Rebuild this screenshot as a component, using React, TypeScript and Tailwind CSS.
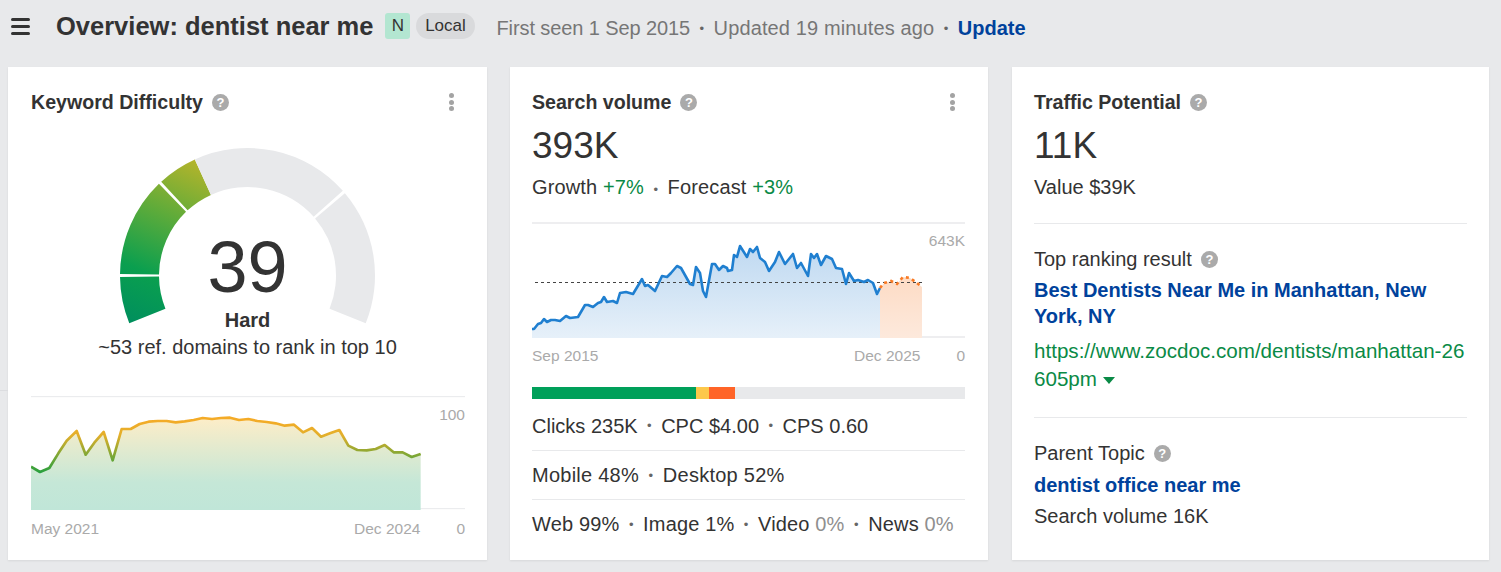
import React from 'react';

const kdPoints = '93,262 120,278 148,266 175,222 200,184 230,155 257,226 283,190 311,158 338,243 365,149 392,149 419,134 446,127 473,125 500,125 527,129 554,126 581,122 608,116 636,119 663,116 690,115 717,122 745,119 772,125 800,128 827,132 854,139 882,136 909,159 936,146 963,172 990,162 1018,152 1045,199 1072,212 1100,213 1127,209 1154,197 1181,219 1208,219 1235,233 1262,224';

const volumePoints = '532,329 534,329 538,324 541,323 544,319 547,322 551,320 555,320 560,321 566,316 570,318 578,317 585,305 588,305 593,307 598,303 601,302 604,297 607,302 613,301 617,303 620,293 626,292 633,294 642,279 645,286 648,285 655,291 662,276 667,277 671,273 677,266 681,268 690,284 693,285 696,267 700,273 703,291 706,297 712,264 715,264 719,270 723,266 727,268 728,271 732,270 734,255 737,257 740,246 747,257 750,249 753,252 757,247 760,258 765,262 769,271 775,262 779,252 785,264 793,254 797,268 801,263 808,276 811,254 814,258 817,254 821,265 826,256 832,259 836,268 842,269 846,284 849,273 854,281 858,280 864,282 868,280 873,283 877,294 880,288';

const forecastPoints = '880,288 884,283 891,281 897,284 903,277 910,278 917,283 922,287';

// gauge centre and radii, measured from the screenshot
const CX = 247.5;
const CY = 275.5;
const R_OUT = 127.5;
const R_IN = 88.5;

const arc = (from: number, to: number) => {
  const pt = (r: number, deg: number) => {
    const a = (deg * Math.PI) / 180;
    return `${(CX + r * Math.cos(a)).toFixed(2)} ${(CY - r * Math.sin(a)).toFixed(2)}`;
  };
  return `M${pt(R_OUT, from)} A${R_OUT} ${R_OUT} 0 0 1 ${pt(R_OUT, to)} L${pt(R_IN, to)} A${R_IN} ${R_IN} 0 0 0 ${pt(R_IN, from)} Z`;
};

const Help = () => (
  <span className="ml-[9px] inline-flex h-[17px] w-[17px] items-center justify-center rounded-full bg-[#aaaaaa] text-[13px] font-bold leading-none text-white">?</span>
);

const Kebab = () => (
  <div className="flex flex-col gap-[1.5px]">
    <span className="h-[5px] w-[5px] rounded-full bg-[#a3a3a3]" />
    <span className="h-[5px] w-[5px] rounded-full bg-[#a3a3a3]" />
    <span className="h-[5px] w-[5px] rounded-full bg-[#a3a3a3]" />
  </div>
);

const CardTitle = ({ title, menu }: { title: string; menu?: boolean }) => (
  <div className="flex h-[22px] items-center justify-between pr-[11px]">
    <div className="flex items-center text-[19.6px] font-bold text-[#333333]">
      <span className="pt-px">{title}</span>
      <Help />
    </div>
    {menu && <Kebab />}
  </div>
);

const Dot = () => <span className="mx-[9.5px] text-[13px] leading-none text-[#666666]">•</span>;

const Gauge = () => (
  <svg width="434" height="195" viewBox="31 140 434 195" className="block">
    <defs>
      <linearGradient id="gaugeFill" gradientUnits="userSpaceOnUse" x1="135" y1="325" x2="205" y2="165">
        <stop offset="0" stopColor="#008f5d" />
        <stop offset="0.3" stopColor="#0a9f4f" />
        <stop offset="0.65" stopColor="#5dab3a" />
        <stop offset="1" stopColor="#b3b42b" />
      </linearGradient>
    </defs>
    <path d={arc(202, 180.7)} fill="url(#gaugeFill)" />
    <path d={arc(179.3, 134)} fill="url(#gaugeFill)" />
    <path d={arc(132.6, 114.4)} fill="url(#gaugeFill)" />
    <path d={arc(114.4, 41.6)} fill="#e8e9eb" />
    <path d={arc(40.2, -22)} fill="#e8e9eb" />
  </svg>
);

const KdChart = () => (
  <svg width="434" height="115" viewBox="93 50 1302 345" className="block">
    <defs>
      <linearGradient id="kdLine" gradientUnits="userSpaceOnUse" x1="0" y1="120" x2="0" y2="280">
        <stop offset="0" stopColor="#f4ab27" />
        <stop offset="0.3" stopColor="#e3af2b" />
        <stop offset="1" stopColor="#27a03e" />
      </linearGradient>
      <linearGradient id="kdArea" gradientUnits="userSpaceOnUse" x1="0" y1="120" x2="0" y2="390">
        <stop offset="0" stopColor="#fcedc8" />
        <stop offset="0.7" stopColor="#c5e7d7" />
        <stop offset="1" stopColor="#c0e6d8" />
      </linearGradient>
    </defs>
    <line x1="93" y1="52" x2="1395" y2="52" stroke="#e8e9eb" strokeWidth="3" />
    <line x1="93" y1="388" x2="1395" y2="388" stroke="#e8e9eb" strokeWidth="3" />
    <polygon points={`${kdPoints} 1262,392 93,392`} fill="url(#kdArea)" />
    <polyline points={kdPoints} fill="none" stroke="url(#kdLine)" strokeWidth="8" strokeLinejoin="round" />
  </svg>
);

const VolumeChart = () => (
  <svg width="433" height="116" viewBox="532 222 433 116" className="block">
    <defs>
      <linearGradient id="volArea" gradientUnits="userSpaceOnUse" x1="0" y1="246" x2="0" y2="337">
        <stop offset="0" stopColor="#bfd9f1" />
        <stop offset="1" stopColor="#e6f0f9" />
      </linearGradient>
      <linearGradient id="foreArea" gradientUnits="userSpaceOnUse" x1="0" y1="280" x2="0" y2="337">
        <stop offset="0" stopColor="#fddcc6" />
        <stop offset="1" stopColor="#fde9dc" />
      </linearGradient>
    </defs>
    <line x1="532" y1="223" x2="965" y2="223" stroke="#e8e9eb" strokeWidth="1.5" />
    <line x1="532" y1="337" x2="965" y2="337" stroke="#e8e9eb" strokeWidth="1.5" />
    <polygon points={`${volumePoints} 880,338 532,338`} fill="url(#volArea)" />
    <polygon points={`${forecastPoints} 922,338 880,338`} fill="url(#foreArea)" />
    <line x1="535" y1="282.5" x2="922" y2="282.5" stroke="#444444" strokeWidth="1" strokeDasharray="3 3" />
    <polyline points={volumePoints} fill="none" stroke="#1f7fd0" strokeWidth="2.6" strokeLinejoin="round" />
    <polyline points={forecastPoints} fill="none" stroke="#f97a24" strokeWidth="2.6" strokeDasharray="3 3.5" />
  </svg>
);

const Green = ({ children }: { children: React.ReactNode }) => <span className="text-[#0a8a46]">{children}</span>;

const Muted = ({ children }: { children: React.ReactNode }) => <span className="text-[#8f8f8f]">{children}</span>;

export default function App() {
  return (
    <div className="relative h-[572px] w-[1501px] overflow-hidden bg-[#e8e9eb] text-[20px] text-[#333333] [font-family:'Liberation_Sans',Arial,sans-serif]">
      <div className="absolute left-0 top-[390px] h-px w-[8px] bg-[#dcdde0]" />

      <header className="flex h-[67px] items-start pl-[11px] pt-[13px]">
        <div className="mt-[5px] flex w-[19px] flex-col gap-[4px]">
          <span className="h-[3px] rounded-sm bg-[#333333]" />
          <span className="h-[3px] rounded-sm bg-[#333333]" />
          <span className="h-[3px] rounded-sm bg-[#333333]" />
        </div>
        <h1 className="ml-[26px] text-[25.5px] font-bold leading-[27px] text-[#333333]">Overview: dentist near me</h1>
        <span className="ml-[12px] flex h-[26px] w-[25px] items-center justify-center rounded-[3px] bg-[#b3e6d1] text-[17px]">N</span>
        <span className="ml-[6px] flex h-[26px] w-[59px] items-center justify-center rounded-full bg-[#d9dadc] pr-px text-[17px]">Local</span>
        <div className="ml-[22px] flex h-[30px] items-center text-[#767676]">
          <span className="-ml-px tracking-[-0.1px]">First seen 1 Sep 2015</span>
          <Dot />
          <span className="tracking-[0.12px]">Updated 19 minutes ago</span>
          <Dot />
          <a className="font-bold text-[#00429c]">Update</a>
        </div>
      </header>

      <main className="grid grid-cols-[479px_478px_478px] gap-x-[23px] pl-[8px]">
        <section className="h-[493px] bg-white pl-[23px] pr-[22px] pt-[24px] shadow-[0_1px_2px_rgba(0,0,0,0.08)]">
          <CardTitle title="Keyword Difficulty" menu />
          <div className="relative mt-[27px]">
            <Gauge />
            <div className="absolute inset-x-0 top-[85px] flex flex-col items-center pr-[1px]">
              <div className="text-[72px] leading-[84px] text-[#333333]">39</div>
              <div className="text-[20px] font-bold leading-[22px]">Hard</div>
            </div>
          </div>
          <div className="mt-px pr-[1px] text-center leading-[22px]">~53 ref. domains to rank in top 10</div>
          <div className="relative mt-[38px]">
            <KdChart />
            <span className="absolute right-0 top-[9px] text-[15.5px] leading-[20px] text-[#aaaaaa]">100</span>
          </div>
          <div className="mt-[8px] flex text-[15.5px] leading-[20px] text-[#aaaaaa]">
            <span>May 2021</span>
            <span className="ml-auto mr-[36px]">Dec 2024</span>
            <span>0</span>
          </div>
        </section>

        <section className="h-[493px] bg-white pl-[22px] pr-[23px] pt-[24px] shadow-[0_1px_2px_rgba(0,0,0,0.08)]">
          <div className="-mr-[1px]">
            <CardTitle title="Search volume" menu />
          </div>
          <div className="mt-[11px] text-[37px] leading-[44px]">393K</div>
          <div className="mt-[7px] leading-[24px] tracking-[0.13px]">
            Growth <Green>+7%</Green>
            <Dot />
            Forecast <Green>+3%</Green>
          </div>
          <div className="relative mt-[23px]">
            <VolumeChart />
            <span className="absolute right-0 top-[9px] text-[15.5px] leading-[20px] text-[#aaaaaa]">643K</span>
          </div>
          <div className="mt-[8px] flex text-[15.5px] leading-[20px] text-[#aaaaaa]">
            <span>Sep 2015</span>
            <span className="ml-auto mr-[36px]">Dec 2025</span>
            <span>0</span>
          </div>
          <div className="mt-[21px] flex h-[12px] bg-[#e8e9eb]">
            <span className="w-[164px] bg-[#00a05a]" />
            <span className="w-[13px] bg-[#fdc84b]" />
            <span className="w-[26px] bg-[#ff6428]" />
          </div>
          <div className="flex h-[52px] items-center border-b border-[#e8e9eb] pt-[2px]">
            Clicks 235K<Dot />CPC $4.00<Dot />CPS 0.60
          </div>
          <div className="flex h-[49px] items-center border-b border-[#e8e9eb] tracking-[0.25px]">
            Mobile 48%<Dot />Desktop 52%
          </div>
          <div className="flex h-[48px] items-center tracking-[0.15px]">
            <span>Web 99%</span><Dot /><span>Image 1%</span><Dot />
            <span className="whitespace-pre">Video <Muted>0%</Muted></span><Dot />
            <span className="whitespace-pre">News <Muted>0%</Muted></span>
          </div>
        </section>

        <section className="ml-px h-[493px] bg-white pl-[22px] pr-[22px] pt-[24px] shadow-[0_1px_2px_rgba(0,0,0,0.08)]">
          <CardTitle title="Traffic Potential" />
          <div className="mt-[11px] text-[37px] leading-[44px]">11K</div>
          <div className="mt-[7px] leading-[24px]">Value $39K</div>
          <div className="mt-[24px] border-t border-[#e8e9eb] pt-[23px]">
            <div className="flex h-[24px] items-center">Top ranking result<Help /></div>
            <a className="mt-[6px] block font-bold leading-[26px] text-[#00429c]">Best Dentists Near Me in Manhattan, New York, NY</a>
            <div className="mt-[8px] break-all text-[20.6px] leading-[28px] text-[#0a8a46]">
              https://www.zocdoc.com/dentists/manhattan-26605pm
              <span className="ml-[6px] inline-block h-0 w-0 border-x-[6px] border-t-[7px] border-x-transparent border-t-[#0a8a46] align-middle" />
            </div>
          </div>
          <div className="mt-[24px] border-t border-[#e8e9eb] pt-[23px]">
            <div className="flex h-[24px] items-center">Parent Topic<Help /></div>
            <a className="mt-[8px] block font-bold leading-[24px] text-[#00429c]">dentist office near me</a>
            <div className="mt-[7px] leading-[24px]">Search volume 16K</div>
          </div>
        </section>
      </main>
    </div>
  );
}
